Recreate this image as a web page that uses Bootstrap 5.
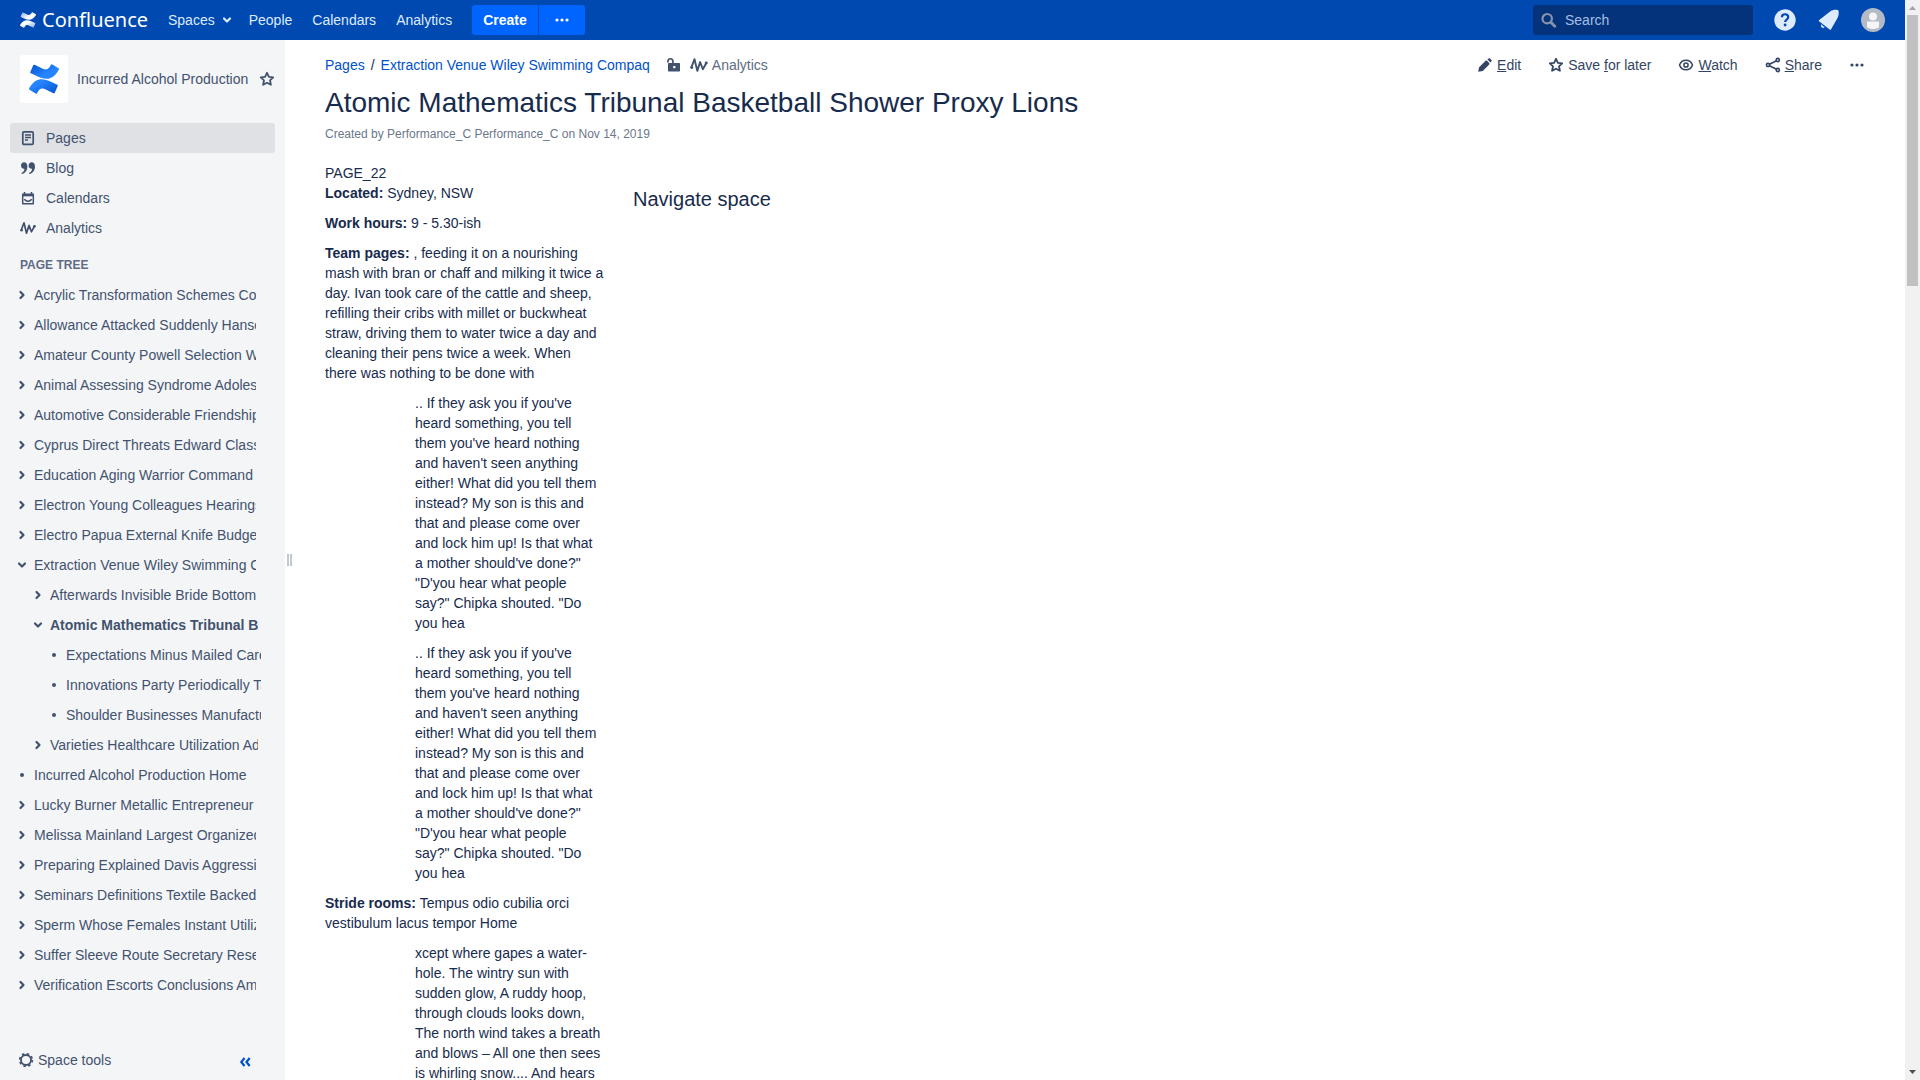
<!DOCTYPE html>
<html lang="en">
<head>
<meta charset="utf-8">
<meta name="viewport" content="width=device-width, initial-scale=1">
<title>Atomic Mathematics Tribunal Basketball Shower Proxy Lions - Confluence</title>
<link rel="stylesheet" href="https://cdn.jsdelivr.net/npm/bootstrap@5.3.0/dist/css/bootstrap.min.css">
<script src="https://cdn.jsdelivr.net/npm/bootstrap@5.3.0/dist/js/bootstrap.bundle.min.js"></script>
<style>
body{font-family:"Liberation Sans",Arial,sans-serif;font-size:14px;line-height:20px;color:#172b4d;background:#fff}
a{color:inherit;text-decoration:none}
svg{display:block;flex:none}
p{margin:0}
.topbar{height:40px;background:#0049b0;color:#deebff;padding:0 20px}
.wordmark{font-family:"Noto Sans","Open Sans",sans-serif;font-size:20px;line-height:30px;color:#fff;width:106px;margin-left:6px}
.topnav{gap:20px;margin-left:20px}
.spaces-link{gap:4px;margin-right:-6px}
.bar-btn{height:30px;border:0;background:#0065ff;color:#fff;font-weight:700;padding:0 11px}
.btn-create{border-radius:3px 0 0 3px}
.btn-dots{border-radius:0 3px 3px 0;margin-left:1px;padding:0 15px}
.searchbox{width:220px;height:30px;border-radius:3px;background:#04337b;padding:0 8px;gap:8px}
.searchbox input{background:none;border:0;outline:0;padding:0;width:100%;color:#b3c9e8}
.searchbox input::placeholder{color:#a5bfe4;opacity:1}
.sidebar{width:285px;background:#f4f5f7;color:#42526e}
.space-head{padding:15px 10px 20px 20px;gap:9px}
.space-logo{width:48px;height:48px;background:#fff;border-radius:3px}
.side-nav{padding:0 10px}
.side-link{height:30px;padding:0 10px;gap:10px;border-radius:3px}
.side-link.active{background:#dfe1e5}
.tree-title{font-size:12px;font-weight:700;color:#5e6c84;margin:12px 20px 5px;line-height:20px}
.tree{list-style:none;margin:0;padding:0}
.tree-row{height:30px;gap:4px}
.tree-row a{overflow:hidden;white-space:nowrap;flex:1}
.tree-row button{border:0;background:none;padding:0;color:inherit;width:16px;height:16px;flex:none}
.tree-row i{width:4px;height:4px;border-radius:50%;background:currentColor;margin:0 6px;flex:none}
.lv1{padding-left:14px;margin-right:29px}
.lv2{padding-left:30px;margin-right:27px}
.lv3{padding-left:46px;margin-right:24px}
.side-foot{padding:0 32px 10px 18px}
.tools-btn{color:#344563}
.plain-btn{border:0;background:none;padding:0;color:inherit}
.grip{width:5px;height:12px;border:solid #c1c7d0;border-width:0 2px;margin:auto 13px auto 2px}
.page-main{padding:15px 40px 0 20px}
.link-blue{color:#0052cc}
.crumb-sep{padding:0 6px}
.crumb-stat{color:#5e6c84;gap:4px}
.crumb-stat svg{color:#42526e}
.page-actions{gap:27px;color:#344563}
.page-actions button{gap:4px}
h1{font-size:28px;line-height:32px;font-weight:400;margin:12px 0 5px}
.byline{font-size:12px;color:#6b778c}
.page-body{padding-top:19px;gap:28px}
.col-text{width:280px}
.col-text p{margin-bottom:10px}
.col-text .quoted{margin-left:90px;margin-right:3px}
h2{font-size:20px;line-height:24px;font-weight:400;margin:0}
.scrollrail{width:15px;background:#f1f1f1;color:#505050}
.thumb{width:11px;height:271px;background:#c1c1c1}
</style>
</head>
<body>
<svg width="0" height="0" class="position-absolute" aria-hidden="true">
<defs>
<linearGradient id="gb1" x1="1" y1="1" x2="0.1" y2="0.2"><stop offset="0" stop-color="#0052cc"/><stop offset=".8" stop-color="#2684ff"/></linearGradient>
<linearGradient id="gb2" x1="0" y1="0" x2="0.8" y2="0.7"><stop offset="0" stop-color="#0052cc"/><stop offset=".8" stop-color="#2684ff"/></linearGradient>
<linearGradient id="gw1" x1="1" y1="1" x2="0.1" y2="0.2"><stop offset="0" stop-color="#7ea6dc"/><stop offset=".7" stop-color="#fff"/></linearGradient>
<linearGradient id="gw2" x1="0" y1="0" x2="0.9" y2="0.7"><stop offset="0" stop-color="#7ea6dc"/><stop offset=".7" stop-color="#fff"/></linearGradient>
<path id="wave1" d="M.87 18.257c-.248.382-.53.875-.763 1.245a.764.764 0 0 0 .255 1.04l4.965 3.054a.764.764 0 0 0 1.058-.26c.199-.332.454-.763.733-1.221 1.967-3.247 3.945-2.853 7.508-1.146l4.957 2.337a.764.764 0 0 0 1.028-.382l2.364-5.346a.764.764 0 0 0-.382-1 599.851 599.851 0 0 1-4.965-2.361C10.911 10.97 5.224 11.185.87 18.257z"/>
<path id="wave2" d="M23.131 5.743c.249-.405.531-.875.764-1.25a.764.764 0 0 0-.256-1.034L18.675.404a.764.764 0 0 0-1.058.26c-.195.335-.451.763-.734 1.225-1.966 3.246-3.945 2.85-7.508 1.146L4.437.694a.764.764 0 0 0-1.027.382L1.046 6.422a.764.764 0 0 0 .382 1c1.039.49 3.105 1.467 4.965 2.361 6.698 3.246 12.392 3.029 16.738-4.04z"/>
<symbol id="star" viewBox="0 0 16 16"><path d="M8 1.800l1.900 4 4.300.5-3.200 3 .9 4.500L8 11.700l-3.900 2.100.9-4.500-3.200-3 4.300-.5z" fill="none" stroke="currentColor" stroke-width="1.800" stroke-linejoin="round"/></symbol>
<symbol id="pulse" viewBox="0 0 16 16"><path d="M1.200 10.200L4 2.800l2.500 10.400L9 5.400l2.400 6.400L14.600 6" fill="none" stroke="currentColor" stroke-width="1.700" stroke-linejoin="round" stroke-linecap="round"/><circle cx="1.600" cy="10.200" r="1.300" fill="currentColor"/><circle cx="14.400" cy="6.200" r="1.300" fill="currentColor"/></symbol>
<symbol id="right" viewBox="0 0 16 16"><path d="M6.500 5l3 3-3 3" fill="none" stroke="currentColor" stroke-width="2.200" stroke-linecap="round" stroke-linejoin="round"/></symbol>
<symbol id="down" viewBox="0 0 16 16"><path d="M5 6.500l3 3 3-3" fill="none" stroke="currentColor" stroke-width="2.200" stroke-linecap="round" stroke-linejoin="round"/></symbol>
<symbol id="dots" viewBox="0 0 16 16"><g fill="currentColor"><circle cx="3" cy="8" r="1.600"/><circle cx="8" cy="8" r="1.600"/><circle cx="13" cy="8" r="1.600"/></g></symbol>
</defs>
</svg>
<div class="d-flex vh-100 overflow-hidden">
 <div class="d-flex flex-column flex-grow-1 overflow-hidden">
  <header class="topbar d-flex align-items-center flex-shrink-0">
   <a href="#" class="d-flex align-items-center">
    <svg width="16" height="16" viewBox="0 0 24 24"><use href="#wave1" fill="url(#gw1)"/><use href="#wave2" fill="url(#gw2)"/></svg>
    <span class="wordmark">Confluence</span>
   </a>
   <nav class="topnav d-flex">
    <a href="#" class="spaces-link d-flex align-items-center">Spaces<svg width="16" height="16"><use href="#down"/></svg></a>
    <a href="#">People</a><a href="#">Calendars</a><a href="#">Analytics</a>
   </nav>
   <div class="d-flex ps-3 ms-1">
    <button type="button" class="bar-btn btn-create">Create</button>
    <button type="button" class="bar-btn btn-dots" aria-label="More create options"><svg width="16" height="16"><use href="#dots"/></svg></button>
   </div>
   <label class="searchbox d-flex align-items-center ms-auto">
    <svg width="16" height="16" viewBox="0 0 16 16" fill="none" stroke="#8593ab" stroke-width="2.200"><circle cx="6.200" cy="6.700" r="4.700"/><path d="M9.800 10.200l4 4" stroke-width="2.800" stroke-linecap="round"/></svg>
    <input type="text" placeholder="Search" aria-label="Search">
   </label>
   <div class="d-flex align-items-center">
    <button type="button" class="plain-btn ms-3 ps-1" aria-label="Help"><svg width="24" height="24" viewBox="0 0 24 24"><circle cx="12" cy="12" r="10.700" fill="#deebff"/><path d="M8.900 9.300c0-4 6.300-4 6.300-.2 0 2.400-3.100 2.500-3.100 5" fill="none" stroke="#0049b0" stroke-width="2.200"/><circle cx="12.100" cy="17" r="1.400" fill="#0049b0"/></svg></button>
    <button type="button" class="plain-btn ms-3 ps-1" aria-label="Notifications"><svg width="24" height="24" viewBox="0 0 24 24" fill="#deebff"><path d="M1.900 12.300L12.500 4c3-2.300 6-2.300 7.800-2 .6-.2 1.500.6 1.300 1.300.2 2 .3 4.600-1.500 7.500L13.900 21.400c-.3.600-.8.600-1.200.2L2 13.300c-.4-.3-.4-.7-.1-1z"/><path d="M4.200 16.200c-.8 2.600.6 4.200 3.600 3.600z"/></svg></button>
    <button type="button" class="plain-btn ms-3 ps-1" aria-label="Profile"><svg width="24" height="24" viewBox="0 0 24 24"><circle cx="12" cy="12" r="12" fill="#b3bac5"/><circle cx="12" cy="8.500" r="4" fill="#f4f5f7"/><path d="M6 13.500h12v5c0 3.300-12 3.300-12 0z" fill="#f4f5f7"/></svg></button>
   </div>
  </header>
  <div class="d-flex flex-grow-1 overflow-hidden">
   <aside class="sidebar d-flex flex-column flex-shrink-0">
    <div class="space-head d-flex align-items-center">
     <a href="#" class="space-logo d-flex align-items-center justify-content-center"><svg width="30" height="30" viewBox="0 0 24 24"><use href="#wave1" fill="url(#gb1)"/><use href="#wave2" fill="url(#gb2)"/></svg></a>
     <a href="#" class="flex-grow-1 text-nowrap">Incurred Alcohol Production</a>
     <button type="button" class="plain-btn" aria-label="Favourite space"><svg width="16" height="16"><use href="#star"/></svg></button>
    </div>
    <nav class="side-nav">
     <a href="#" class="side-link active d-flex align-items-center"><svg width="16" height="16" viewBox="0 0 16 16" fill="none" stroke="currentColor"><rect x="2.800" y="1.800" width="10.400" height="12.600" rx="1.200" stroke-width="1.700"/><path d="M5 5h6M5 7.500h6M5 10h3" stroke-width="1.300"/></svg>Pages</a>
     <a href="#" class="side-link d-flex align-items-center"><svg width="16" height="16" viewBox="0 0 16 16" fill="currentColor"><path id="q" d="M4 2.200c2 0 3.400 1.500 3.400 4.200 0 4-2.400 7-5.600 7.600l-.4-1c2-.8 3-2.200 3-4.200C2.600 9 1 7.700 1 5.500 1 3.600 2.300 2.200 4 2.200z"/><use href="#q" x="7.600"/></svg>Blog</a>
     <a href="#" class="side-link d-flex align-items-center"><svg width="16" height="16" viewBox="0 0 16 16" fill="none" stroke="currentColor"><path d="M2.700 4.500h10.600v9.200H2.700z" stroke-width="1.500" stroke-linejoin="round"/><path d="M2 5h12" stroke-width="2.600"/><path d="M4.500 2v2M11.500 2v2" stroke-width="1.600"/><path d="M4.500 9c1 3 6 3 7 0" stroke-width="1.300"/></svg>Calendars</a>
     <a href="#" class="side-link d-flex align-items-center"><svg width="16" height="16"><use href="#pulse"/></svg>Analytics</a>
    </nav>
    <h2 class="tree-title">PAGE TREE</h2>
    <ul class="tree" id="tree"></ul>
    <div class="side-foot d-flex align-items-center mt-auto">
     <button type="button" class="plain-btn tools-btn d-flex align-items-center gap-1 flex-grow-1"><svg width="16" height="16" viewBox="0 0 16 16" fill="none" stroke="currentColor"><circle cx="8" cy="8" r="5" stroke-width="1.800"/><circle cx="8" cy="8" r="6.300" stroke-width="1.700" stroke-dasharray="2.450 2.498"/></svg>Space tools</button>
     <button type="button" class="plain-btn link-blue" aria-label="Collapse sidebar"><svg width="16" height="16" viewBox="0 0 16 16" fill="none" stroke="currentColor" stroke-width="2.200"><path d="M7.500 6l-3.200 4 3.200 4M12.700 6l-3.200 4 3.200 4"/></svg></button>
    </div>
   </aside>
   <div class="d-flex flex-shrink-0"><div class="grip"></div></div>
   <main class="page-main flex-grow-1 overflow-hidden">
    <div class="d-flex justify-content-between">
     <div class="d-flex align-items-center text-nowrap">
      <a href="#" class="link-blue">Pages</a><span class="crumb-sep">/</span><a href="#" class="link-blue me-3">Extraction Venue Wiley Swimming Compaq</a>
      <svg width="16" height="16" viewBox="0 0 16 16" class="me-2"><path d="M1.900 5.500V4.600c0-3.800 5-3.800 5 0V7" fill="none" stroke="#42526e" stroke-width="1.700"/><path fill="#42526e" fill-rule="evenodd" d="M3 6h10c.6 0 1 .4 1 1v6.500c0 .6-.4 1-1 1H3c-.6 0-1-.4-1-1V7c0-.6.400-1 1-1zm4.200 3v2.200h2.200V9z"/></svg>
      <a href="#" class="crumb-stat d-flex align-items-center"><svg width="18" height="18"><use href="#pulse"/></svg>Analytics</a>
     </div>
     <div class="page-actions d-flex align-items-center">
      <button type="button" class="plain-btn d-flex align-items-center"><svg width="16" height="16" viewBox="0 0 16 16" fill="currentColor"><path d="M1.200 14.800l.9-4.600 6.500-6.400c.5-.5 1-.5 1.500 0l2.100 2.100c.5.500.5 1 0 1.500l-6.400 6.500zM10.400 2.500l1-.8c.6-.6 1.200-.6 1.800 0l1.100 1.100c.6.600.6 1.200 0 1.800l-.8 1z"/></svg><span><u>E</u>dit</span></button>
      <button type="button" class="plain-btn d-flex align-items-center"><svg width="16" height="16"><use href="#star"/></svg><span>Save <u>f</u>or later</span></button>
      <button type="button" class="plain-btn d-flex align-items-center"><svg width="16" height="16" viewBox="0 0 16 16" fill="none" stroke="currentColor" stroke-width="1.500"><path d="M1.500 8c2.300-6.300 10.700-6.300 13 0-2.300 6.300-10.700 6.300-13 0z"/><circle cx="8" cy="8" r="2.100"/></svg><span><u>W</u>atch</span></button>
      <button type="button" class="plain-btn d-flex align-items-center"><svg width="16" height="16" viewBox="0 0 16 16" fill="none" stroke="currentColor" stroke-width="1.600"><circle cx="3" cy="8" r="1.600"/><circle cx="12.800" cy="3" r="1.600"/><circle cx="12.800" cy="13" r="1.600"/><path d="M4.500 7.300l7-3.600M4.500 8.700l7 3.600"/></svg><span><u>S</u>hare</span></button>
      <button type="button" class="plain-btn" aria-label="More actions"><svg width="16" height="16"><use href="#dots"/></svg></button>
     </div>
    </div>
    <h1>Atomic Mathematics Tribunal Basketball Shower Proxy Lions</h1>
    <p class="byline">Created by <a href="#">Performance_C Performance_C</a> on <a href="#">Nov 14, 2019</a></p>
    <div class="page-body d-flex">
     <div class="col-text flex-shrink-0">
      <p>PAGE_22<br><b>Located:</b> Sydney, NSW</p>
      <p><b>Work hours:</b> 9 - 5.30-ish</p>
      <p><b>Team pages:</b> , feeding it on a nourishing mash with bran or chaff and milking it twice a day. Ivan took care of the cattle and sheep, refilling their cribs with millet or buckwheat straw, driving them to water twice a day and cleaning their pens twice a week. When there was nothing to be done with</p>
      <p class="quoted">.. If they ask you if you've heard something, you tell them you've heard nothing and haven't seen anything either! What did you tell them instead? My son is this and that and please come over and lock him up! Is that what a mother should've done?" "D'you hear what people say?" Chipka shouted. "Do you hea</p>
      <p class="quoted">.. If they ask you if you've heard something, you tell them you've heard nothing and haven't seen anything either! What did you tell them instead? My son is this and that and please come over and lock him up! Is that what a mother should've done?" "D'you hear what people say?" Chipka shouted. "Do you hea</p>
      <p><b>Stride rooms:</b> Tempus odio cubilia orci vestibulum lacus tempor Home</p>
      <p class="quoted">xcept where gapes a water-hole. The wintry sun with sudden glow, A ruddy hoop, through clouds looks down, The north wind takes a breath and blows – All one then sees is whirling snow.... And hears</p>
     </div>
     <h2 class="pt-4">Navigate space</h2>
    </div>
   </main>
  </div>
 </div>
 <div class="scrollrail d-flex flex-column align-items-center flex-shrink-0" aria-hidden="true">
  <svg width="15" height="15" viewBox="0 0 15 15"><path d="M4 10h7L7.500 6z" fill="#a3a3a3"/></svg>
  <div class="thumb"></div>
  <svg class="mt-auto" width="15" height="15" viewBox="0 0 15 15"><path d="M4 5h7L7.500 9z" fill="#505050"/></svg>
 </div>
</div>
<script>
const pages=[
[1,'r','Acrylic Transformation Schemes Conditions'],[1,'r','Allowance Attacked Suddenly Hansen'],[1,'r','Amateur County Powell Selection Wide'],[1,'r','Animal Assessing Syndrome Adolescent'],[1,'r','Automotive Considerable Friendship'],[1,'r','Cyprus Direct Threats Edward Classic'],[1,'r','Education Aging Warrior Command'],[1,'r','Electron Young Colleagues Hearings'],[1,'r','Electro Papua External Knife Budget'],[1,'d','Extraction Venue Wiley Swimming Compaq'],
[2,'r','Afterwards Invisible Bride Bottom'],[2,'d','Atomic Mathematics Tribunal Basketball'],[3,'','Expectations Minus Mailed Career'],[3,'','Innovations Party Periodically Table'],[3,'','Shoulder Businesses Manufacturer'],[2,'r','Varieties Healthcare Utilization Adult'],
[1,'','Incurred Alcohol Production Home'],[1,'r','Lucky Burner Metallic Entrepreneur'],[1,'r','Melissa Mainland Largest Organized'],[1,'r','Preparing Explained Davis Aggressive'],[1,'r','Seminars Definitions Textile Backed'],[1,'r','Sperm Whose Females Instant Utilization'],[1,'r','Suffer Sleeve Route Secretary Reserve'],[1,'r','Verification Escorts Conclusions Amount']];
document.getElementById('tree').innerHTML=pages.map(([lv,k,t])=>`<li class="tree-row lv${lv} d-flex align-items-center">${k?`<button type="button" aria-label="Toggle ${t}"><svg width="16" height="16"><use href="#${k==='r'?'right':'down'}"/></svg></button>`:'<i></i>'}<a href="#" class="${t.startsWith('Atomic')?'fw-bold':''}">${t}</a></li>`).join('');
</script>
</body>
</html>
